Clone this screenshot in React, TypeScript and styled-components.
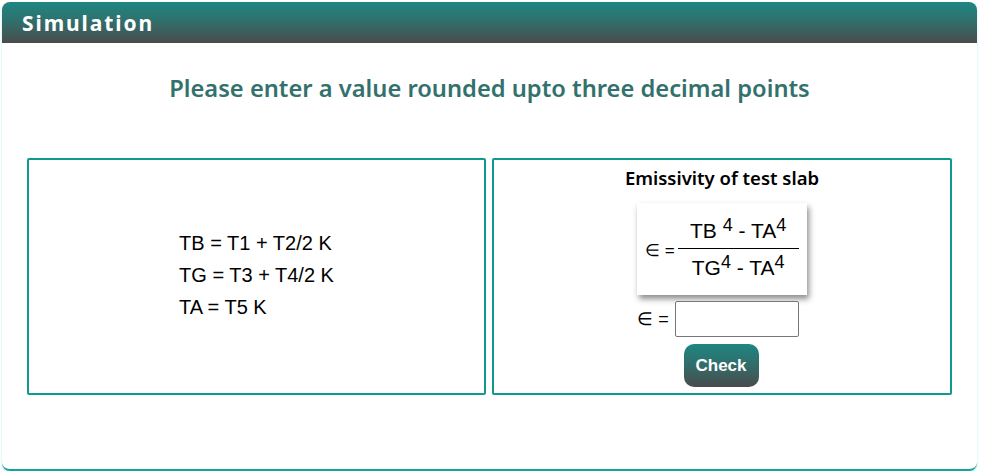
import React from "react";
import styled, { createGlobalStyle } from "styled-components";

const Global = createGlobalStyle`
  html, body { margin: 0; padding: 0; background: #fff; }
  body { font-family: "Noto Sans", Arial, sans-serif; }
  * { box-sizing: border-box; }
`;

const Card = styled.div`
  margin: 2px 4px 0 2px;
  width: 975px;
  height: 469px;
  border-radius: 8px;
  border-bottom: 2px solid #16a3a0;
  box-shadow: 0 1px 2px rgba(110, 210, 230, 0.6);
  display: flex;
  flex-direction: column;
  background: #fff;
`;

const Header = styled.div`
  height: 41px;
  border-radius: 8px 8px 0 0;
  background: linear-gradient(to bottom, #1f8682 0%, #2d7370 40%, #4a4c4c 100%);
  display: flex;
  align-items: center;
  padding-left: 20px;
`;

const HeaderTitle = styled.h1`
  margin: 0;
  color: #fff;
  font-family: "Noto Sans", sans-serif;
  font-weight: 700;
  font-size: 21px;
  letter-spacing: 1.9px;
`;

const Instruction = styled.h2`
  margin: 29px 0 0;
  text-align: center;
  color: #33716d;
  font-family: "Noto Sans", sans-serif;
  font-weight: 600;
  font-size: 23.7px;
  line-height: 32px;
`;

const Panels = styled.div`
  margin: 54px 0 0 25px;
  display: grid;
  grid-template-columns: 459px 460px;
  gap: 6px;
`;

const Panel = styled.div`
  height: 237px;
  border: 2px solid #0f998f;
  border-radius: 2px;
  display: flex;
  flex-direction: column;
  align-items: center;
`;

const DefPanel = styled(Panel)`
  justify-content: center;
`;

const Defs = styled.div`
  font-family: "Liberation Sans", Arial, sans-serif;
  font-size: 20px;
  color: #000;
  line-height: 32px;
  margin-bottom: 4px;
`;

const PanelTitle = styled.div`
  margin-top: 5px;
  font-family: "Noto Sans", sans-serif;
  font-weight: 600;
  font-size: 18.5px;
  color: #000;
`;

const FormulaBox = styled.div`
  margin-top: 13px;
  width: 170px;
  height: 92px;
  background: #fff;
  box-shadow: 2px 4px 6px rgba(0, 0, 0, 0.45);
  display: flex;
  align-items: center;
  padding-left: 8px;
  font-family: "Liberation Sans", Arial, sans-serif;
  color: #000;
`;

const Eps = styled.span`
  font-size: 17px;
  margin-right: 3px;
  margin-top: 2px;
`;

const Fraction = styled.div`
  display: flex;
  flex-direction: column;
  align-items: center;
  width: 121px;
`;

const FracPart = styled.div<{ $top?: boolean }>`
  font-size: 21px;
  line-height: 22px;
  padding: ${(p) => (p.$top ? "0 0 6px" : "8px 0 0")};
  ${(p) => (p.$top ? "border-bottom: 1px solid #000;" : "")}
  width: 100%;
  text-align: center;
  sup { font-size: 18px; vertical-align: 7px; line-height: 0; }
`;

const AnswerRow = styled.div`
  margin-top: 6px;
  display: flex;
  align-items: center;
  gap: 6px;
  margin-right: 8px;
  font-family: "Liberation Sans", Arial, sans-serif;
  font-size: 18px;
`;

const Input = styled.input`
  width: 124px;
  height: 36px;
  border: 1px solid #767676;
  border-radius: 2px;
  padding: 0 4px;
`;

const CheckButton = styled.button`
  margin-top: 7px;
  margin-right: 2px;
  width: 75px;
  height: 43px;
  border: none;
  border-radius: 10px;
  background: linear-gradient(to bottom, #1f8682 0%, #2f6f6c 45%, #4a4c4c 100%);
  color: #fff;
  font-family: "Liberation Sans", Arial, sans-serif;
  font-weight: 700;
  font-size: 17px;
  cursor: pointer;
`;

export default function App() {
  return (
    <>
      <Global />
      <Card>
        <Header>
          <HeaderTitle>Simulation</HeaderTitle>
        </Header>
        <Instruction>Please enter a value rounded upto three decimal points</Instruction>
        <Panels>
          <DefPanel>
            <Defs>
              <div>TB = T1 + T2/2 K</div>
              <div>TG = T3 + T4/2 K</div>
              <div>TA = T5 K</div>
            </Defs>
          </DefPanel>
          <Panel>
            <PanelTitle>Emissivity of test slab</PanelTitle>
            <FormulaBox>
              <Eps>∈ =</Eps>
              <Fraction>
                <FracPart $top>
                  TB <sup>4</sup> - TA<sup>4</sup>
                </FracPart>
                <FracPart>
                  TG<sup>4</sup> - TA<sup>4</sup>
                </FracPart>
              </Fraction>
            </FormulaBox>
            <AnswerRow>
              <span>∈ =</span>
              <Input type="text" />
            </AnswerRow>
            <CheckButton>Check</CheckButton>
          </Panel>
        </Panels>
      </Card>
    </>
  );
}
